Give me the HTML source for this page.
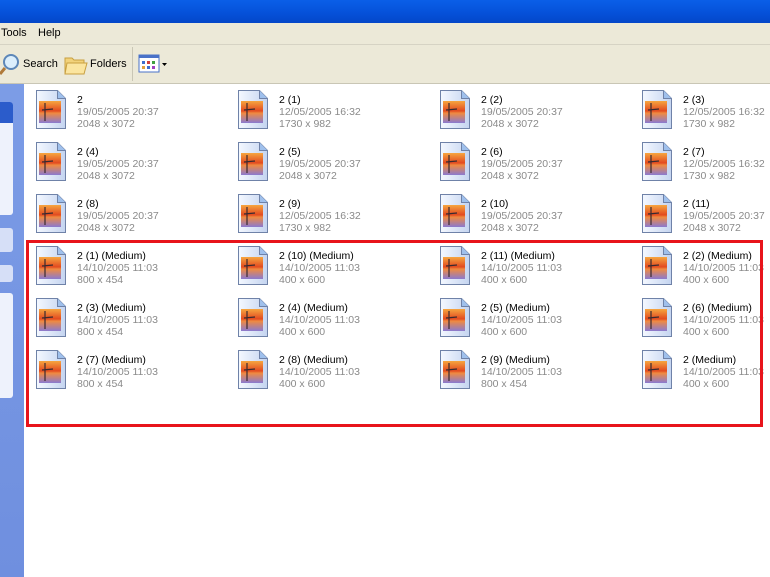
<!DOCTYPE html>
<html><head><style>
body{margin:0;width:770px;height:577px;overflow:hidden;background:#fff;font-family:"Liberation Sans",Tahoma,sans-serif;font-size:11px;position:relative}
.title{position:absolute;left:0;top:0;width:770px;height:23px;background:linear-gradient(#0a5fe8,#0550d8 60%,#0447c8)}
.menu{position:absolute;left:0;top:23px;width:770px;height:21px;background:#ece9d8;border-bottom:1px solid #d6d3c4}
.menu span{position:absolute;top:4px;font-size:11px;color:#000}
.tb{position:absolute;left:0;top:45px;width:770px;height:38px;background:#ece9d8;border-bottom:1px solid #c9c6b5}
.tb span{position:absolute;top:13px;color:#000}
.left{position:absolute;left:0;top:84px;width:24px;height:493px;background:linear-gradient(#7c9ce6,#6f8fdf)}
.box{position:absolute;left:0;width:13px;background:#d6dff7;border-radius:0 3px 3px 0}
.item{position:absolute;width:200px;height:48px}
.ic{position:absolute;left:0;top:0;width:32px;height:41px}
.t{position:absolute;left:42px;top:5px;line-height:12px;white-space:nowrap;font-size:10.5px}
.g{color:#8a8a8a}
.red{position:absolute;left:26px;top:240px;width:731px;height:181px;border:3px solid #e8141b}
</style></head><body>
<div class="title"></div>
<div class="menu"><span style="left:1px">Tools</span><span style="left:38px">Help</span></div>
<div class="tb">
<svg style="position:absolute;left:0;top:7px" width="22" height="24"><circle cx="11" cy="10" r="7" fill="#dbeefc" stroke="#5d87b8" stroke-width="2"/><line x1="5" y1="16" x2="0" y2="22" stroke="#b07a3a" stroke-width="3"/></svg>
<span style="left:23px">Search</span>
<svg style="position:absolute;left:64px;top:9px" width="24" height="22"><path d="M1 4h7l2 2h10v14H1z" fill="#f2d27a" stroke="#c8a040"/><path d="M3 9h20l-3 11H1z" fill="#fbe59f" stroke="#c8a040"/></svg>
<span style="left:90px">Folders</span>
<div style="position:absolute;left:132px;top:2px;width:1px;height:34px;background:#c9c6b5"></div>
<svg style="position:absolute;left:138px;top:9px" width="32" height="20"><rect x="1" y="1" width="20" height="17" fill="#fff" stroke="#4a72c8"/><rect x="1" y="1" width="20" height="3" fill="#4a72c8"/><g fill="#3c6fd0"><rect x="4" y="7" width="3" height="3"/><rect x="9" y="7" width="3" height="3" fill="#d04040"/><rect x="14" y="7" width="3" height="3" fill="#40a040"/><rect x="4" y="12" width="3" height="3" fill="#e0a040"/><rect x="9" y="12" width="3" height="3"/><rect x="14" y="12" width="3" height="3" fill="#a040c0"/></g><path d="M24 9h5l-2.5 3z" fill="#000"/></svg>
</div>
<div class="left">
<div class="box" style="top:18px;height:113px;background:#eef2fc"><div style="height:21px;background:#2b5ccb;border-radius:0 3px 0 0"></div></div>
<div class="box" style="top:144px;height:24px"></div>
<div class="box" style="top:181px;height:17px"></div>
<div class="box" style="top:209px;height:105px;background:#eef2fc"></div>
</div>
<svg width="0" height="0" style="position:absolute"><defs>
<linearGradient id="pg" x1="0" x2="1"><stop offset="0" stop-color="#f4f8ff"/><stop offset="1" stop-color="#c4d4f0"/></linearGradient>
<linearGradient id="ph" x1="0" y1="0" x2="0" y2="1"><stop offset="0" stop-color="#f6a640"/><stop offset=".45" stop-color="#e24a20"/><stop offset=".55" stop-color="#f08a40"/><stop offset="1" stop-color="#8a7ad0"/></linearGradient>
<g id="icon"><path d="M1.5 1.5h21l8 8v30h-29z" fill="url(#pg)" stroke="#6f82a8"/><path d="M22.5 1.5v8h8" fill="#9fc0ec" stroke="#6f82a8"/><rect x="4" y="12" width="22" height="22" fill="url(#ph)"/><path d="M10 14v18M7 21l11-1" stroke="#3a2a30" stroke-width="1.2"/></g>
</defs></svg>
<div id="g"></div>
<div class="red"></div>
<script>
var d=[["2","19/05/2005 20:37","2048 x 3072"],["2 (1)","12/05/2005 16:32","1730 x 982"],["2 (2)","19/05/2005 20:37","2048 x 3072"],["2 (3)","12/05/2005 16:32","1730 x 982"],
["2 (4)","19/05/2005 20:37","2048 x 3072"],["2 (5)","19/05/2005 20:37","2048 x 3072"],["2 (6)","19/05/2005 20:37","2048 x 3072"],["2 (7)","12/05/2005 16:32","1730 x 982"],
["2 (8)","19/05/2005 20:37","2048 x 3072"],["2 (9)","12/05/2005 16:32","1730 x 982"],["2 (10)","19/05/2005 20:37","2048 x 3072"],["2 (11)","19/05/2005 20:37","2048 x 3072"],
["2 (1) (Medium)","14/10/2005 11:03","800 x 454"],["2 (10) (Medium)","14/10/2005 11:03","400 x 600"],["2 (11) (Medium)","14/10/2005 11:03","400 x 600"],["2 (2) (Medium)","14/10/2005 11:03","400 x 600"],
["2 (3) (Medium)","14/10/2005 11:03","800 x 454"],["2 (4) (Medium)","14/10/2005 11:03","400 x 600"],["2 (5) (Medium)","14/10/2005 11:03","400 x 600"],["2 (6) (Medium)","14/10/2005 11:03","400 x 600"],
["2 (7) (Medium)","14/10/2005 11:03","800 x 454"],["2 (8) (Medium)","14/10/2005 11:03","400 x 600"],["2 (9) (Medium)","14/10/2005 11:03","800 x 454"],["2 (Medium)","14/10/2005 11:03","400 x 600"]];
var h="";d.forEach(function(e,i){var x=35+202*(i%4),y=89+52*Math.floor(i/4);
h+='<div class="item" style="left:'+x+'px;top:'+y+'px"><svg class="ic" viewBox="0 0 32 41"><use href="#icon"/></svg><div class="t">'+e[0]+'<br><span class="g">'+e[1]+'<br>'+e[2]+'</span></div></div>';});
document.getElementById("g").innerHTML=h;
</script>
</body></html>
